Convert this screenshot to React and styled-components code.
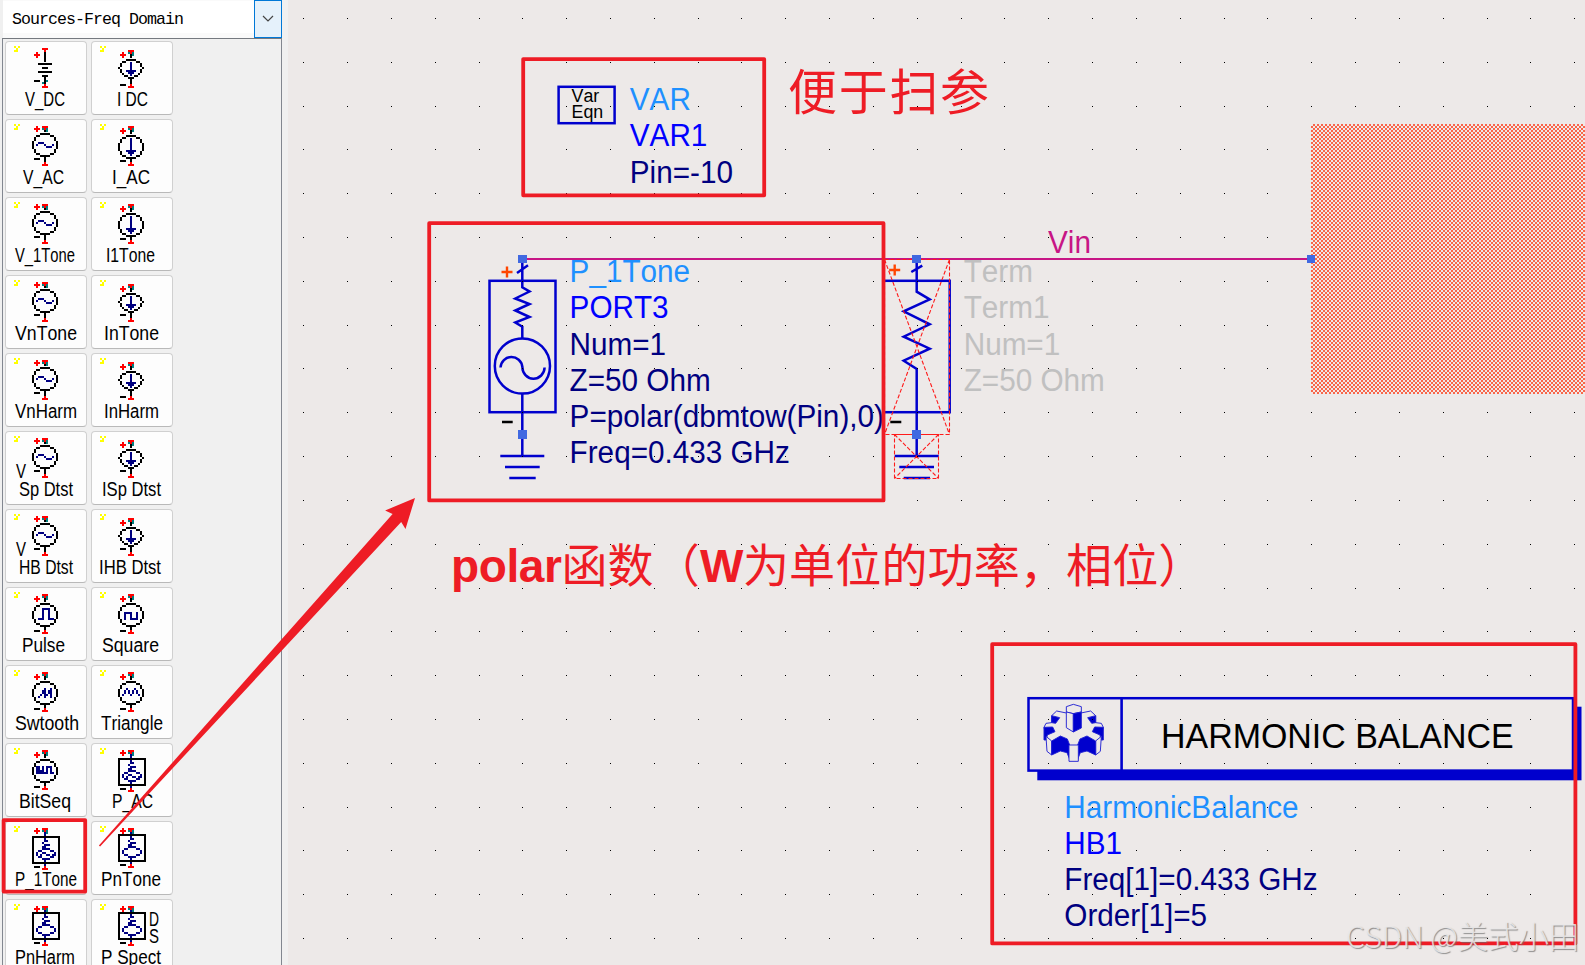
import React from 'react';
import styled, { createGlobalStyle } from 'styled-components';

const GlobalStyle = createGlobalStyle`
  * { box-sizing: border-box; }
  html, body { margin: 0; padding: 0; overflow: hidden; }
`;

const SANS = '"Liberation Sans", Arial, sans-serif';
const BLUE = '#0000cd';
const MARK = '#ee1c25';
const PAPER = '#ede9e8';

/* ---------- palette icons: bitmaps on a grid of 2px cells ---------- */

const INK = { R: '#ff0000', K: '#000000', N: '#000080', T: '#008080', Y: '#ffff00' };

const ROUND = [
  '....KKKKK....',
  '..KK.....KK..',
  '.K.........K.',
  '.K.........K.',
  'K...........K',
  'K...........K',
  'K...........K',
  'K...........K',
  '.K.........K.',
  '.K.........K.',
  '..KK.....KK..',
  '....KKKKK....',
];
const SQUAT = [
  '....KKKKK....',
  '..KK.....KK..',
  '.K.........K.',
  '.K.........K.',
  'K...........K',
  '.K.........K.',
  '.K.........K.',
  '..K.......K..',
  '...KK...KK...',
  '.....KKK.....',
];
const PLUS = ['.R.', 'RRR', '.R.'];
const PIN = ['RRR', 'TRT', '.KT'];
const CHECK = ['Y.Y', '.Y.', 'YY.'];
const SINE = ['.NNN.....', 'N...N...N', '.....NNN.'];
const ARROW = ['..N..', '..N..', '..N..', '..N..', 'NNNNN', '.NNN.', '..N..'];
const LONG_ARROW = ['..N..', '..N..', ...ARROW];
const WAVES = {
  pulse: [12, 8, ['..NNNN..', '..N..N..', '..N..N..', '..N..N..', '..N..N..', 'NNN..NNN']],
  square: [12, 10, ['NNNN..N', 'N..N..N', 'N..N..N', 'N..NNNN']],
  saw: [12, 9, ['...N..N', '..NN.NN', '..NN.NN', '.N.NN.N', 'N..N..N']],
  triangle: [11, 9, ['..N...N..', '.N.N.N.N.', '.N.N.N.N.', 'N...N...N']],
  bits: [11, 9, ['NN.N.NNN.', 'NN.N.N.N.', 'NNNN.N.N.', 'NNNNNN.NN']],
};
const ZIGZAG = ['..N..', '..NN.', '.N...', '..NNN', '.NN..', '..N..'];
const LOAD = [
  '...NNNN...',
  '.NN....NN.',
  'N........N',
  'N........N',
  '.NN....NN.',
  '...NNNN...',
];
const LOAD_SINE = [
  '...NNNN...',
  '.NN....NN.',
  'N..NN....N',
  'N.N..NN.NN',
  '.NN....NN.',
  '...NNNN...',
];

function cellsFor({ kind, wave, minus }) {
  const cells = [];
  const stamp = (x, y, rows) =>
    rows.forEach((row, j) => [...row].forEach((c, i) => c !== '.' && cells.push([x + i, y + j, c])));
  const stem = (from, to, c = 'K') => {
    for (let y = from; y <= to; y += 1) cells.push([15, y, c]);
  };
  const foot = (y) => stamp(14, y, ['.R.', 'RRR']);
  stamp(0, 0, CHECK);
  if (kind === 'battery') {
    stamp(14, 1, ['RRR', '.R.']);
    stamp(10, 3, PLUS);
    stem(3, 7);
    stamp(12, 8.5, ['KKKKKKK', '', '..KKK..', '', 'KKKKKKK', '', '..KKK..']);
    stem(15, 17);
    stamp(14, 17, ['..T', 'TK.']);
    foot(19);
  } else if (kind === 'volt') {
    stamp(14, 1, PIN);
    stamp(10, 1, PLUS);
    stamp(9, 4.5, ROUND);
    stamp(11, 9, SINE);
    stem(16, 18);
    foot(19);
  } else if (kind === 'ampTall') {
    stamp(14, 1, PIN);
    stamp(10, 2, PLUS);
    stem(4, 4);
    stamp(9, 5.5, ROUND);
    stamp(13, 7, LONG_ARROW);
    stem(17, 18);
    foot(19);
  } else if (kind === 'amp') {
    stamp(14, 2, PIN);
    stamp(10, 3, PLUS);
    stem(5, 5);
    stamp(9, 6.5, SQUAT);
    stamp(13, 8, ARROW);
    stem(16, 18);
    foot(19);
  } else if (kind === 'wave') {
    stamp(14, 1, PIN);
    stamp(10, 2, PLUS);
    stem(4, 4);
    stamp(9, 5.5, ROUND);
    stamp(...WAVES[wave]);
    stem(17, 18);
    foot(19);
  } else {
    const tone = kind === 'portTone';
    const top = tone ? 5 : 4;
    stamp(14, 1, ['RRR', 'TRT', '.NT']);
    stamp(10, 1, PLUS);
    stem(4, top, 'N');
    for (let i = 0; i < 14; i += 1) {
      cells.push([9 + i, top, 'K'], [9 + i, top + 13, 'K'], [9, top + i, 'K'], [22, top + i, 'K']);
    }
    stamp(13, top + 1, ZIGZAG);
    stamp(11, top + 6, tone ? LOAD_SINE : LOAD);
    stem(top + 12, top + 14, 'N');
    foot(top + 15);
  }
  stamp(10, minus, ['KKK']);
  return cells;
}

const PixelText = styled.text`
  font-family: ${SANS};
  font-size: 19.5px;
  font-kerning: none;
  fill: #000;
`;

const TileArt = styled.svg`
  display: block;
  width: 82px;
  height: 74px;
  margin: -1px;
  overflow: visible;
`;

function Icon({ part }) {
  const byInk = {};
  cellsFor(part).forEach(([x, y, c]) => {
    byInk[c] = `${byInk[c] || ''}M${9 + x * 2} ${5 + y * 2}h2v2h-2z`;
  });
  const [from, to] = part.span;
  return (
    <TileArt viewBox="0 0 82 74">
      <g shapeRendering="crispEdges">
        {Object.keys(byInk).map((c) => (
          <path key={c} d={byInk[c]} fill={INK[c]} />
        ))}
      </g>
      <PixelText x={from - 1} y="64.5" textLength={to - from + 2} lengthAdjust="spacingAndGlyphs">
        {part.name}
      </PixelText>
      {(part.extra || []).map(([letter, x, y]) => (
        <PixelText key={letter} x={x} y={y} textLength="10" lengthAdjust="spacingAndGlyphs">
          {letter}
        </PixelText>
      ))}
    </TileArt>
  );
}

const PARTS = [
  { name: 'V_DC', kind: 'battery', minus: 17, span: [21, 59] },
  { name: 'I DC', kind: 'amp', minus: 19, span: [27, 56] },
  { name: 'V_AC', kind: 'volt', minus: 17, span: [19, 58] },
  { name: 'I_AC', kind: 'ampTall', minus: 18, span: [22, 58] },
  { name: 'V_1Tone', kind: 'volt', minus: 17, span: [11, 69] },
  { name: 'I1Tone', kind: 'ampTall', minus: 18, span: [16, 63] },
  { name: 'VnTone', kind: 'volt', minus: 17, span: [11, 71] },
  { name: 'InTone', kind: 'amp', minus: 17, span: [14, 67] },
  { name: 'VnHarm', kind: 'volt', minus: 17, span: [11, 71] },
  { name: 'InHarm', kind: 'amp', minus: 19, span: [14, 67] },
  { name: 'Sp Dtst', kind: 'volt', minus: 17, span: [15, 67], extra: [['V', 11, 46.5]] },
  { name: 'ISp Dtst', kind: 'amp', minus: 17, span: [12, 69] },
  { name: 'HB Dtst', kind: 'volt', minus: 17, span: [15, 67], extra: [['V', 11, 46.5]] },
  { name: 'IHB Dtst', kind: 'amp', minus: 17, span: [9, 69] },
  { name: 'Pulse', kind: 'wave', wave: 'pulse', minus: 19, span: [18, 59] },
  { name: 'Square', kind: 'wave', wave: 'square', minus: 19, span: [12, 67] },
  { name: 'Swtooth', kind: 'wave', wave: 'saw', minus: 19, span: [11, 73] },
  { name: 'Triangle', kind: 'wave', wave: 'triangle', minus: 19, span: [11, 71] },
  { name: 'BitSeq', kind: 'wave', wave: 'bits', minus: 19, span: [15, 65] },
  { name: 'P_AC', kind: 'portTone', minus: 20, span: [22, 61] },
  { name: 'P_1Tone', kind: 'portTone', minus: 20, span: [11, 71] },
  { name: 'PnTone', kind: 'port', minus: 19, span: [11, 69] },
  { name: 'PnHarm', kind: 'port', minus: 19, span: [11, 69] },
  { name: 'P Spect', kind: 'port', minus: 19, span: [11, 69], extra: [['D', 58, 26.5], ['S', 58, 44]] },
];

/* ---------- page frame ---------- */

const Window = styled.div`
  position: relative;
  display: flex;
  width: 1585px;
  height: 965px;
  overflow: hidden;
  background: ${PAPER};
`;

const Sidebar = styled.aside`
  flex: none;
  width: 288px;
  height: 965px;
  padding: 0 6px 0 2px;
  overflow: hidden;
  background: #f0f0f0;
`;

const Combo = styled.div`
  display: flex;
  height: 38px;
  width: 280px;
  padding-left: 1px;
`;

const ComboValue = styled.div`
  flex: 1;
  padding-left: 9px;
  border: solid #fafafa;
  border-width: 1px 0 5px;
  background: #fff;
  font: 16.6px/38px "Liberation Mono", monospace;
  letter-spacing: -0.96px;
  white-space: pre;
  color: #000;
`;

const ComboButton = styled.button`
  display: flex;
  align-items: center;
  justify-content: center;
  width: 28px;
  height: 38px;
  padding: 0;
  border: 1px solid #0078d7;
  background: #e5f1fb;
`;

const Palette = styled.div`
  display: grid;
  grid-template-columns: 82px 82px;
  grid-auto-rows: 74px;
  gap: 4px;
  align-content: start;
  width: 280px;
  height: 1000px;
  padding: 2px 0 0 2px;
  border: 1px solid #828790;
  border-top-color: #75797f;
`;

const Tile = styled.div`
  border: 1px solid #d0d0d0;
  border-bottom-color: #b9b9b9;
  border-radius: 4px;
  background: #fdfdfd;
`;

const Canvas = styled.main`
  flex: 1;
`;

/* Full-size drawing layer lying over the schematic area */
const Layer = styled.svg`
  position: absolute;
  left: 0;
  top: 0;
  width: 1585px;
  height: 965px;
  pointer-events: none;
`;

const Hatch = styled.div`
  position: absolute;
  left: 1311px;
  top: 124px;
  width: 274px;
  height: 269.5px;
  background: repeating-conic-gradient(#f9654a 0 25%, #efeae8 0 50%) 0 0 / 4px 4px;
`;

const Note = styled.div`
  position: absolute;
  left: ${(p) => p.$x}px;
  top: ${(p) => p.$y}px;
  font: ${(p) => p.$size || 29.7}px/${(p) => p.$pitch || 36.15}px ${SANS};
  font-kerning: none;
  white-space: pre;
  color: ${(p) => p.$color || '#000080'};
`;

/* Stretched upwards from its baseline to get the taller capitals */
const NoteLine = styled.div`
  color: ${(p) => p.$color || 'inherit'};
  transform: scaleY(1.045);
  transform-origin: 0 78.5%;
`;

const Remark = styled.div`
  position: absolute;
  left: ${(p) => p.$x}px;
  top: ${(p) => p.$y}px;
  font-family: "Liberation Sans", "Noto Sans CJK SC", sans-serif;
  font-size: ${(p) => p.$size}px;
  line-height: 60px;
  letter-spacing: ${(p) => p.$track || 0}px;
  white-space: nowrap;
  color: ${MARK};

  b {
    letter-spacing: -0.4px;
  }
`;

const Watermark = styled.div`
  position: absolute;
  left: 1346px;
  top: 912px;
  font: 300 30.3px/46px "Noto Sans CJK SC", sans-serif;
  white-space: nowrap;
  color: rgba(236, 234, 234, 0.85);
  text-shadow: 1px 1px 1px rgba(110, 110, 110, 0.75);
`;

const TYPE = '#1e90ff';
const NAME = '#0000ff';

function Grid() {
  let d = '';
  for (let n = -3; n <= 26; n += 1) {
    for (let m = 0; m <= 21; m += 1) {
      const x = Math.floor(435.18 + 43.83 * n);
      const y = Math.floor(18.36 + 43.82 * m);
      if (!(x > 1310 && y > 123 && y < 394)) d += `M${x} ${y}h1v1h-1z`;
    }
  }
  return <path d={d} fill="#000" shapeRendering="crispEdges" />;
}

function Gear() {
  const half = (
    <>
      <path d="M139 69L110 63L95 77L95 98L78 100L72 112L78 139" fill="none" />
      <path d="M95 77L119 83L107 100L95 98Z" fill={BLUE} />
      <path d="M72 112L98 111L105 125L82 135L79 150L72 150Z" fill={BLUE} />
      <path d="M78 139L95 153V195L81 184Z" fill={PAPER} />
      <path d="M95 153L121 138L142 147L149 165V208L141 188L121 183L95 195Z" fill={BLUE} />
    </>
  );
  return (
    <g transform="translate(1020 690) scale(.33333)" stroke="#2020d2" strokeWidth="2.8" strokeLinejoin="round">
      {half}
      <g transform="translate(322 0) scale(-1 1)">{half}</g>
      <path d="M147 165H175V214H147Z" fill={PAPER} />
      <path d="M139 50L160 43L184 50V66L160 71L139 66Z" fill={PAPER} />
      <path d="M139 66L160 71V126L139 113Z" fill={PAPER} />
      <path d="M184 66L160 71V126L184 114Z" fill={BLUE} />
    </g>
  );
}

function Schematic() {
  return (
    <Layer viewBox="0 0 1585 965">
      <g fill="none" stroke={BLUE} strokeWidth="2.5">
        <rect x="558.6" y="86.8" width="56" height="36.4" />
        <path d="M522.3 259V287.3L529.5 291.5L515.3 298.5L529.5 304L515.3 310.5L529.5 317L515.3 322.5L522.3 326.7V338.5M522.3 393.5V456M517 273L528 265.3" />
        <rect x="489.5" y="280.8" width="66" height="131.4" />
        <circle cx="522.4" cy="366" r="27.6" />
        <path d="M500.5 367.5A11 11.3 0 0 1 522.4 367A11 11.3 0 0 0 544.6 367.5" />
        <path d="M500.3 456H544.3M505 467H539.7M509.3 478H535.7" />
        <path d="M916.7 259V291.7L929.7 299.3L903.7 311.3L929.7 324.3L903.7 336.7L929.7 348.7L903.7 360.7L916.7 369V456M911.3 272L922.3 265.7" />
        <rect x="883.7" y="280.8" width="66" height="131.4" />
        <path d="M894.7 456H938.7M899.3 467H934M903.7 478H930" />
      </g>
      <path d="M522 259H1311" stroke="#c71585" strokeWidth="2" />
      <path d="M501.5 272H512.5M507 266.5V277.5M889.2 270H900.2M894.7 264.5V275.5" stroke="#ff4500" strokeWidth="2.4" />
      <path d="M502 422H512.7M890.3 422H901.3" stroke="#000" strokeWidth="2.6" />
      <g fill="none" stroke="#ff1a1a" strokeWidth="1.1" strokeDasharray="4 2">
        <path d="M884.5 259.5H949.5V434.5H884.5ZL949.5 434.5M949.5 259.5L884.5 434.5" />
        <path d="M894.5 434.5H938.5V478.5H894.5ZL938.5 478.5M938.5 434.5L894.5 478.5" />
      </g>
      <path
        d="M518 255h9v8h-9zM518 430h9v9h-9zM912 255h9v8h-9zM912 430h9v9h-9zM1307 255h8v8h-8z"
        fill="#4169e1"
      />
      <rect x="1037.3" y="706.7" width="544.2" height="73.6" fill={BLUE} />
      <rect x="1028.5" y="698.2" width="544.5" height="72.4" fill={PAPER} stroke={BLUE} strokeWidth="2.5" />
      <path d="M1121.6 698V770" stroke={BLUE} strokeWidth="2.6" />
      <Gear />
    </Layer>
  );
}

function Markup() {
  return (
    <Layer viewBox="0 0 1585 965">
      <Grid />
      <g fill="none" stroke={MARK} strokeWidth="3.8" strokeLinejoin="round">
        <rect x="523.2" y="59.1" width="241" height="136.2" />
        <rect x="429.2" y="223.2" width="454.3" height="277.2" />
        <rect x="992.2" y="644.2" width="583.2" height="299.2" />
        <rect x="3.6" y="820.2" width="81.6" height="71.4" />
      </g>
      <path
        d="M98.9 845.5L392.6 514.1L385.1 510.5L415 498L405.5 529L401.2 521.9L100.1 846.5Z"
        fill={MARK}
      />
    </Layer>
  );
}

export default function App() {
  return (
    <>
      <GlobalStyle />
      <Window>
        <Sidebar>
          <Combo>
            <ComboValue>Sources-Freq Domain</ComboValue>
            <ComboButton aria-label="Open list">
              <svg width="12" height="8" viewBox="0 0 12 8">
                <path d="M1 1L6 6L11 1" fill="none" stroke="#444" strokeWidth="1.2" />
              </svg>
            </ComboButton>
          </Combo>
          <Palette>
            {PARTS.map((part) => (
              <Tile key={part.name}>
                <Icon part={part} />
              </Tile>
            ))}
          </Palette>
        </Sidebar>
        <Canvas>
          <Hatch />
          <Schematic />
          <Note $x={571.6} $y={88} $size={17.8} $pitch={16} $color="#000">
            <NoteLine>Var</NoteLine>
            <NoteLine>Eqn</NoteLine>
          </Note>
          <Note $x={629.8} $y={82} $pitch={36.3}>
            <NoteLine $color={TYPE}>VAR</NoteLine>
            <NoteLine $color={NAME}>VAR1</NoteLine>
            <NoteLine>Pin=-10</NoteLine>
          </Note>
          <Note $x={569.6} $y={254.2}>
            <NoteLine $color={TYPE}>P_1Tone</NoteLine>
            <NoteLine $color={NAME}>PORT3</NoteLine>
            <NoteLine>Num=1</NoteLine>
            <NoteLine>Z=50 Ohm</NoteLine>
            <NoteLine>P=polar(dbmtow(Pin),0)</NoteLine>
            <NoteLine>Freq=0.433 GHz</NoteLine>
          </Note>
          <Note $x={963.7} $y={254.2} $color="#c0c0c0">
            <NoteLine>Term</NoteLine>
            <NoteLine>Term1</NoteLine>
            <NoteLine>Num=1</NoteLine>
            <NoteLine>Z=50 Ohm</NoteLine>
          </Note>
          <Note $x={1048} $y={225} $color="#c71585">
            <NoteLine>Vin</NoteLine>
          </Note>
          <Note $x={1161} $y={714.5} $size={33.95} $pitch={42} $color="#000">
            <NoteLine>HARMONIC BALANCE</NoteLine>
          </Note>
          <Note $x={1064.3} $y={789.8}>
            <NoteLine $color={TYPE}>HarmonicBalance</NoteLine>
            <NoteLine $color={NAME}>HB1</NoteLine>
            <NoteLine>Freq[1]=0.433 GHz</NoteLine>
            <NoteLine>Order[1]=5</NoteLine>
          </Note>
          <Remark $x={788} $y={63} $size={49} $track={1.7}>便于扫参</Remark>
          <Remark $x={451} $y={536} $size={46} $track={0.15}>
            <b>polar</b>函数（<b>W</b>为单位的功率，相位）
          </Remark>
          <Markup />
          <Watermark>CSDN @美式小田</Watermark>
        </Canvas>
      </Window>
    </>
  );
}
